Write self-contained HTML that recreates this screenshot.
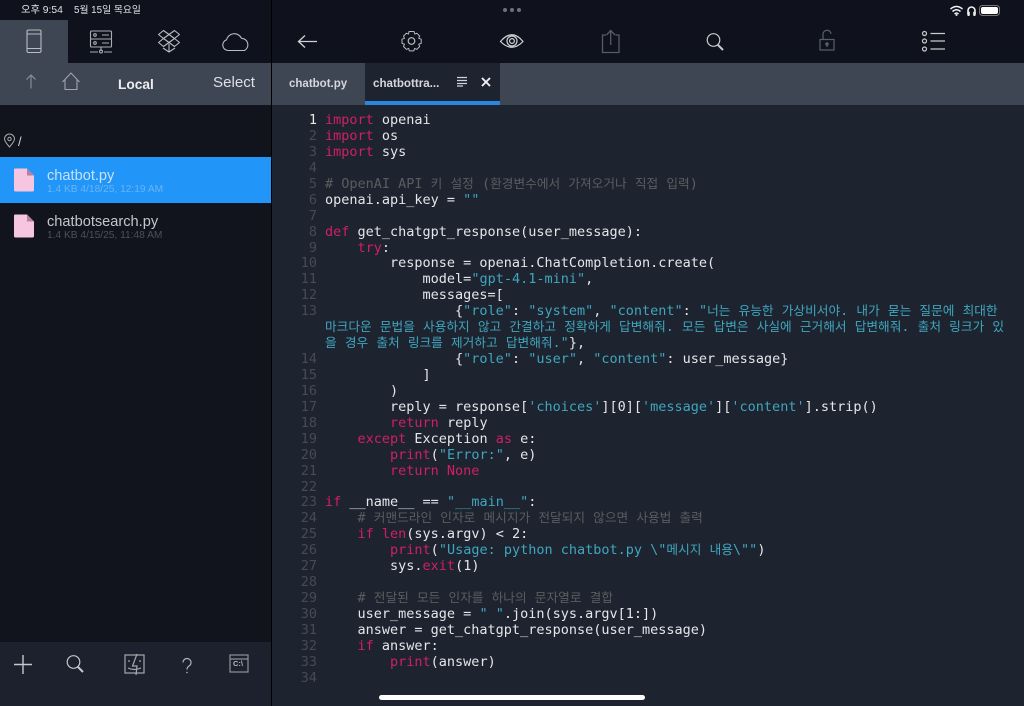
<!DOCTYPE html>
<html><head><meta charset="utf-8">
<style>
html,body{margin:0;padding:0;width:1024px;height:706px;overflow:hidden;background:#0f121c;}
body{position:relative;font-family:"Liberation Sans","Noto Sans CJK KR",sans-serif;color:#ddd;}
.a{position:absolute;}
svg{position:absolute;overflow:visible;fill:none;}
.l{position:absolute;left:325px;height:16px;line-height:16px;white-space:pre;font-family:"DejaVu Sans Mono",monospace;font-size:13.5px;color:#e4e6e8;}
.n{position:absolute;left:290px;width:27px;text-align:right;height:16px;line-height:16px;font-family:"DejaVu Sans Mono",monospace;font-size:13.5px;color:#454a55;}
.p{color:#d11f63;}.s{color:#3fa6bd;}.c{color:#5a5d5e;}
.k{font-family:"Noto Sans CJK KR",sans-serif;font-size:12.7px;line-height:0;}
</style></head><body>
<!-- backgrounds -->
<div class="a" style="left:0;top:63px;width:1024px;height:42px;background:#3e4553;"></div>
<div class="a" style="left:0;top:20px;width:68px;height:43px;background:#3e4553;"></div>
<div class="a" style="left:0;top:105px;width:271px;height:537px;background:#11141d;"></div>
<div class="a" style="left:0;top:642px;width:271px;height:64px;background:#1d212d;"></div>
<div class="a" style="left:272px;top:105px;width:752px;height:601px;background:#1e2330;"></div>
<div class="a" style="left:271px;top:0;width:1px;height:706px;background:#000;"></div>
<!-- status -->
<div class="a" style="left:21px;top:4px;font-size:10.300px;line-height:14px;color:#e0e2e6;white-space:pre;">오후 9:54</div>
<div class="a" style="left:74px;top:4px;font-size:9.800px;line-height:14px;color:#e0e2e6;white-space:pre;">5월 15일 목요일</div>
<div class="a" style="left:503px;top:8px;width:4px;height:4px;border-radius:50%;background:#6d717a;"></div>
<div class="a" style="left:510px;top:8px;width:4px;height:4px;border-radius:50%;background:#6d717a;"></div>
<div class="a" style="left:517px;top:8px;width:4px;height:4px;border-radius:50%;background:#6d717a;"></div>
<svg style="left:950px;top:4px" width="70" height="14" stroke="#f0f0f0">
<path d="M0.500 5Q6.500 0 12.500 5M2.500 7.500Q6.500 4 10.500 7.500M4.500 10Q6.500 8 8.500 10" stroke-width="1.500"/><circle cx="6.500" cy="11" r="1" fill="#f0f0f0" stroke="none"/>
<path d="M18 10V6.500a3.500 3.500 0 0 1 7 0V10" stroke-width="1.600"/><rect x="17.300" y="7.500" width="2.500" height="4.500" rx="1" fill="#f0f0f0" stroke="none"/><rect x="23.200" y="7.500" width="2.500" height="4.500" rx="1" fill="#f0f0f0" stroke="none"/>
<rect x="29.500" y="1.500" width="20" height="10" rx="3" stroke="#777" stroke-width="1"/><rect x="31" y="3" width="17" height="7" rx="2" fill="#fff" stroke="none"/>
</svg>
<!-- sidebar top icons -->
<svg style="left:0;top:20px" width="271" height="43" stroke="#b9bcc2" stroke-width="1.100">
<rect x="27" y="10" width="14" height="22.500" rx="1.500"/><path d="M27 14H41M27 28.500H41"/>
<g stroke="#a9acb2"><rect x="90.500" y="11" width="21" height="8" rx="1"/><rect x="90.500" y="19" width="21" height="8" rx="1"/><path d="M101 27V31M90 32H98M104 32H112"/><circle cx="101" cy="31.500" r="1.500"/><circle cx="95" cy="15" r="1.300"/><circle cx="95" cy="23" r="1.300"/><path d="M102 15H109M102 23H109"/></g>
<path d="M163.500 10.500L169 14.500L163.500 18.500L158.500 14.500ZM174.500 10.500L169 14.500L174.500 18.500L179.500 14.500ZM163.500 18.500L169 22.500L163.500 26.500L158.500 22.500ZM174.500 18.500L169 22.500L174.500 26.500L179.500 22.500ZM163 28L169 32L175 28M169 24V32" stroke-linejoin="round"/>
<path d="M228 30.500a5.500 5.500 0 0 1-1.500-10.700a8 8 0 0 1 15-1.500a6.500 6.500 0 0 1 3 12.200Z" stroke-linejoin="round"/>
</svg>
<!-- nav -->
<svg style="left:0;top:63px" width="271" height="42" stroke="#8d929c" stroke-width="1.100">
<path d="M31 25.500V12M26.500 16.500L31 12L35.500 16.500"/>
<path d="M62.500 19L71 10L79.500 19M65 17V26.500H77V17" stroke="#a0a4ac"/>
</svg>
<div class="a" style="left:118px;top:76px;font-size:13.700px;font-weight:bold;line-height:18px;color:#eceef0;">Local</div>
<div class="a" style="left:213px;top:74px;font-size:15.100px;line-height:18px;color:#dde0e4;">Select</div>
<!-- path -->
<svg style="left:3px;top:133px" width="14" height="16" stroke="#a8abb0" stroke-width="1"><path d="M6.500 14C3 10 1.500 8 1.500 6a5 5 0 0 1 10 0C11.500 8 10 10 6.500 14Z"/><circle cx="6.500" cy="6" r="1.700"/></svg>
<div class="a" style="left:18px;top:134px;font-size:13px;line-height:16px;color:#d0d2d6;">/</div>
<!-- file rows -->
<div class="a" style="left:0;top:157px;width:271px;height:46px;background:#2295f8;"></div>
<svg style="left:14px;top:168px" width="20" height="24"><path d="M0 1.500a1 1 0 0 1 1-1H13L20 7.500V22a1.500 1.500 0 0 1-1.500 1.500H1.500A1.500 1.500 0 0 1 0 22Z" fill="#f6c6e0"/><path d="M13 .5L20 7.500H13Z" fill="#b97fa0"/></svg>
<svg style="left:14px;top:214px" width="20" height="24"><path d="M0 1.500a1 1 0 0 1 1-1H13L20 7.500V22a1.500 1.500 0 0 1-1.500 1.500H1.500A1.500 1.500 0 0 1 0 22Z" fill="#f6c6e0"/><path d="M13 .5L20 7.500H13Z" fill="#b97fa0"/></svg>
<div class="a" style="left:47px;top:167px;font-size:14.600px;line-height:18px;color:#c6e2fb;">chatbot.py</div>
<div class="a" style="left:47px;top:184px;font-size:10.200px;line-height:12px;color:#69b4f5;white-space:pre;">1.4 KB 4/18/25, 12:19 AM</div>
<div class="a" style="left:47px;top:213px;font-size:14.600px;line-height:18px;color:#c4c6ca;">chatbotsearch.py</div>
<div class="a" style="left:47px;top:230px;font-size:10.200px;line-height:12px;color:#4c505a;white-space:pre;">1.4 KB 4/15/25, 11:48 AM</div>
<!-- bottom icons -->
<svg style="left:0;top:642px" width="271" height="64" stroke="#c4c7cc" stroke-width="1.200">
<path d="M23 13V32M14 22.500H32" stroke-width="1.400"/>
<circle cx="73.500" cy="20" r="6.300"/><path d="M78 25L83 30" stroke-width="2"/>
<g stroke="#a5a8ae"><rect x="125" y="13" width="19" height="18"/><path d="M137 12L132.500 24H137L136 33M129 18V20M140 18V20M128 26Q134 29 141 26"/></g>
<path d="M183 20.500a4 4 0 1 1 6 3.500c-1.500 1-2 2-2 3.500" stroke="#b0b3b8"/><circle cx="187" cy="30.500" r=".8" fill="#b0b3b8" stroke="none"/>
<g stroke="#8d9198"><rect x="230" y="13" width="18" height="17"/><path d="M230 17H248"/></g>
</svg>
<div class="a" style="left:233px;top:659px;font-size:7.500px;font-weight:bold;line-height:10px;color:#b5b8bd;">C:\</div>
<!-- top right icons -->
<svg style="left:272px;top:20px" width="752" height="43" stroke="#d0d2d6" stroke-width="1.200">
<path d="M45 21.500H27M33 15.500L26.500 21.500L33 27.500" stroke-width="1.300"/>
<g stroke="#b6b9be"><circle cx="139.500" cy="21" r="3.300"/><path d="M137 11.500h5l.8 2.600 2-.9 2.900 2.900-1 2.200 2.500.9v4.200l-2.500.8 1 2.300-2.900 2.900-2.200-1-.8 2.500h-4.400l-.8-2.500-2.200 1-2.900-2.900 1-2.300-2.500-.8v-4.200l2.500-.9-1-2.200 2.900-2.900 2.100.9Z" stroke-linejoin="round" stroke-width="1"/></g>
<g stroke="#d0d2d6"><path d="M228.500 21.500Q240 8 251 21.500Q240 33 228.500 21.500Z"/><circle cx="240" cy="21" r="5"/><circle cx="240" cy="21" r="2.400"/></g>
<g stroke="#575b66" stroke-width="1.300"><path d="M334 15H330.500V32.500H347V15H343.500M338.700 25V11M334.500 15L338.700 10.500L343 15"/></g>
<circle cx="441.500" cy="20" r="6.300" stroke="#c8cace"/><path d="M446 25L451 30" stroke-width="2" stroke="#c8cace"/>
<g stroke="#5a5e68" stroke-width="1.200"><rect x="548" y="19.500" width="14" height="10.500"/><path d="M551 19.500V14.500a4 4 0 0 1 8-.5"/><circle cx="555" cy="24" r="1.200" fill="#5a5e68"/><path d="M555 24V27"/></g>
<g stroke="#c8cace"><circle cx="652.500" cy="13.500" r="2"/><circle cx="652.500" cy="21" r="2"/><circle cx="652.500" cy="29" r="2"/><path d="M658.500 13.500H673M658.500 21H673M658.500 29H673"/></g>
</svg>
<!-- tabs -->
<div class="a" style="left:365px;top:63px;width:135px;height:38px;background:#1e2330;"></div>
<div class="a" style="left:365px;top:101px;width:135px;height:4px;background:#2a86e2;"></div>
<div class="a" style="left:289px;top:76px;font-size:11.500px;font-weight:bold;line-height:16px;color:#d5d7db;">chatbot.py</div>
<div class="a" style="left:373px;top:76px;font-size:11.600px;font-weight:bold;line-height:16px;color:#d5d7db;">chatbottra...</div>
<svg style="left:456px;top:76px" width="40" height="12"><path d="M1 1.500H11M1 4.500H11M1 7.500H11M1 10H7" stroke="#d0d2d6" stroke-width="1.200"/><path d="M26 2L34 10M34 2L26 10" stroke="#f2f2f2" stroke-width="1.900"/></svg>
<!-- gutter -->
<div class="n" style="top:112px;color:#e8e8e8">1</div>
<div class="n" style="top:128px">2</div><div class="n" style="top:144px">3</div><div class="n" style="top:160px">4</div><div class="n" style="top:176px">5</div><div class="n" style="top:192px">6</div><div class="n" style="top:208px">7</div><div class="n" style="top:224px">8</div><div class="n" style="top:240px">9</div><div class="n" style="top:255px">10</div><div class="n" style="top:271px">11</div><div class="n" style="top:287px">12</div><div class="n" style="top:303px">13</div><div class="n" style="top:351px">14</div><div class="n" style="top:367px">15</div><div class="n" style="top:383px">16</div><div class="n" style="top:399px">17</div><div class="n" style="top:415px">18</div><div class="n" style="top:431px">19</div><div class="n" style="top:447px">20</div><div class="n" style="top:463px">21</div><div class="n" style="top:479px">22</div><div class="n" style="top:494px">23</div><div class="n" style="top:510px">24</div><div class="n" style="top:526px">25</div><div class="n" style="top:542px">26</div><div class="n" style="top:558px">27</div><div class="n" style="top:574px">28</div><div class="n" style="top:590px">29</div><div class="n" style="top:606px">30</div><div class="n" style="top:622px">31</div><div class="n" style="top:638px">32</div><div class="n" style="top:654px">33</div><div class="n" style="top:670px">34</div>
<!-- code -->
<div class="l" style="top:112px"><span class="p">import</span> openai</div>
<div class="l" style="top:128px"><span class="p">import</span> os</div>
<div class="l" style="top:144px"><span class="p">import</span> sys</div>
<div class="l c" style="top:176px"># OpenAI API <span class="k">키</span> <span class="k">설정</span> (<span class="k">환경변수에서</span> <span class="k">가져오거나</span> <span class="k">직접</span> <span class="k">입력</span>)</div>
<div class="l" style="top:192px">openai.api_key = <span class="s">""</span></div>
<div class="l" style="top:224px"><span class="p">def</span> get_chatgpt_response(user_message):</div>
<div class="l" style="top:240px">    <span class="p">try</span>:</div>
<div class="l" style="top:255px">        response = openai.ChatCompletion.create(</div>
<div class="l" style="top:271px">            model=<span class="s">"gpt-4.1-mini"</span>,</div>
<div class="l" style="top:287px">            messages=[</div>
<div class="l" style="top:303px">                {<span class="s">"role"</span>: <span class="s">"system"</span>, <span class="s">"content"</span>: <span class="s">"<span class="k">너는</span> <span class="k">유능한</span> <span class="k">가상비서야</span>. <span class="k">내가</span> <span class="k">묻는</span> <span class="k">질문에</span> <span class="k">최대한</span></span></div>
<div class="l s" style="top:319px"><span class="k">마크다운</span> <span class="k">문법을</span> <span class="k">사용하지</span> <span class="k">않고</span> <span class="k">간결하고</span> <span class="k">정확하게</span> <span class="k">답변해줘</span>. <span class="k">모든</span> <span class="k">답변은</span> <span class="k">사실에</span> <span class="k">근거해서</span> <span class="k">답변해줘</span>. <span class="k">출처</span> <span class="k">링크가</span> <span class="k">있</span></div>
<div class="l" style="top:335px"><span class="s"><span class="k">을</span> <span class="k">경우</span> <span class="k">출처</span> <span class="k">링크를</span> <span class="k">제거하고</span> <span class="k">답변해줘</span>."</span>},</div>
<div class="l" style="top:351px">                {<span class="s">"role"</span>: <span class="s">"user"</span>, <span class="s">"content"</span>: user_message}</div>
<div class="l" style="top:367px">            ]</div>
<div class="l" style="top:383px">        )</div>
<div class="l" style="top:399px">        reply = response[<span class="s">'choices'</span>][0][<span class="s">'message'</span>][<span class="s">'content'</span>].strip()</div>
<div class="l" style="top:415px">        <span class="p">return</span> reply</div>
<div class="l" style="top:431px">    <span class="p">except</span> Exception <span class="p">as</span> e:</div>
<div class="l" style="top:447px">        <span class="p">print</span>(<span class="s">"Error:"</span>, e)</div>
<div class="l" style="top:463px">        <span class="p">return None</span></div>
<div class="l" style="top:494px"><span class="p">if</span> __name__ == <span class="s">"__main__"</span>:</div>
<div class="l c" style="top:510px">    # <span class="k">커맨드라인</span> <span class="k">인자로</span> <span class="k">메시지가</span> <span class="k">전달되지</span> <span class="k">않으면</span> <span class="k">사용법</span> <span class="k">출력</span></div>
<div class="l" style="top:526px">    <span class="p">if len</span>(sys.argv) &lt; 2:</div>
<div class="l" style="top:542px">        <span class="p">print</span>(<span class="s">"Usage: python chatbot.py \"<span class="k">메시지</span> <span class="k">내용</span>\""</span>)</div>
<div class="l" style="top:558px">        sys.<span class="p">exit</span>(1)</div>
<div class="l c" style="top:590px">    # <span class="k">전달된</span> <span class="k">모든</span> <span class="k">인자를</span> <span class="k">하나의</span> <span class="k">문자열로</span> <span class="k">결합</span></div>
<div class="l" style="top:606px">    user_message = <span class="s">" "</span>.join(sys.argv[1:])</div>
<div class="l" style="top:622px">    answer = get_chatgpt_response(user_message)</div>
<div class="l" style="top:638px">    <span class="p">if</span> answer:</div>
<div class="l" style="top:654px">        <span class="p">print</span>(answer)</div>
<!-- home indicator -->
<div class="a" style="left:379px;top:695px;width:266px;height:5px;border-radius:3px;background:#fff;"></div>
</body></html>
